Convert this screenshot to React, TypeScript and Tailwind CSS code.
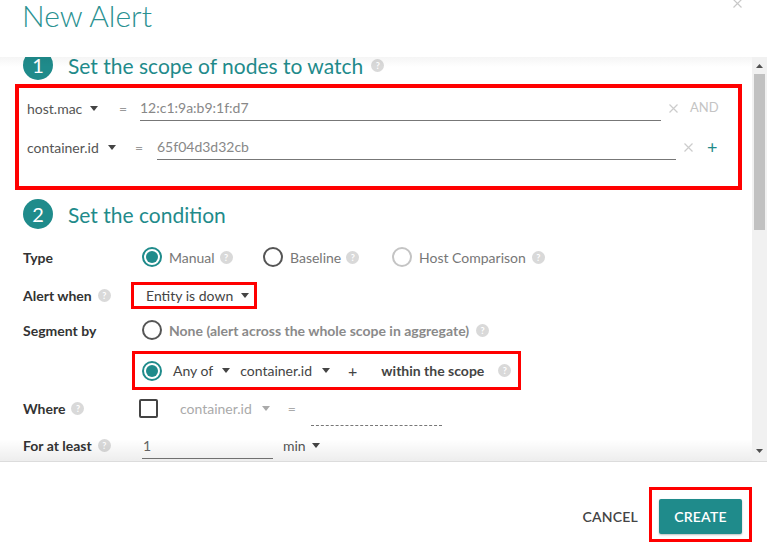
import React from "react";

function Help({ className = "" }: { className?: string }) {
  return (
    <span
      className={`inline-flex h-[13px] w-[13px] shrink-0 items-center justify-center rounded-full bg-[#d9d9d9] text-[9px] font-bold leading-none text-white ${className}`}
    >
      ?
    </span>
  );
}

function Caret({ className = "" }: { className?: string }) {
  return (
    <svg width="8" height="5" viewBox="0 0 8 5" className={`shrink-0 ${className}`}>
      <path d="M0 0h8L4 5z" fill="currentColor" />
    </svg>
  );
}

function Cross({ className = "" }: { className?: string }) {
  return (
    <svg width="9" height="9" viewBox="0 0 9 9" className={`shrink-0 ${className}`}>
      <path d="M0.5 0.5l8 8M8.5 0.5l-8 8" stroke="currentColor" strokeWidth="1.2" />
    </svg>
  );
}

function Radio({ kind }: { kind: "on" | "off" | "disabled" }) {
  if (kind === "on") {
    return (
      <span className="flex h-[20px] w-[20px] shrink-0 items-center justify-center rounded-full border-2 border-[#1f8b8b]">
        <span className="h-[12px] w-[12px] rounded-full bg-[#1f8b8b]" />
      </span>
    );
  }
  return (
    <span
      className={`h-[20px] w-[20px] shrink-0 rounded-full border-2 ${
        kind === "off" ? "border-[#555]" : "border-[#c4c4c4]"
      }`}
    />
  );
}

function Step({ n, title, help, className = "" }: { n: string; title: string; help?: boolean; className?: string }) {
  return (
    <div className={`flex h-[30px] items-center pl-[23px] ${className}`}>
      <span className="flex h-[30px] w-[30px] shrink-0 items-center justify-center rounded-full bg-[#1f8b8b] text-[20px] leading-none text-white">
        {n}
      </span>
      <span className="ml-[15px] text-[21px] leading-none text-[#1f8b8b]">{title}</span>
      {help && <Help className="ml-[8px]" />}
    </div>
  );
}

function Label({ text, help }: { text: string; help?: boolean }) {
  return (
    <div className="flex w-[108px] shrink-0 items-center font-bold text-[#333]">
      {text}
      {help && <Help className="ml-[6px]" />}
    </div>
  );
}

export default function App() {
  return (
    <div className="relative flex h-[545px] w-[767px] flex-col overflow-hidden bg-white font-['Lato',sans-serif] text-[14px] text-[#444]">
      {/* Header */}
      <header className="relative h-[57px] shrink-0 pl-[22px]">
        <h1 className="text-[30px] font-light leading-[30px] text-[#2a9191]">New Alert</h1>
        <Cross className="absolute right-[25px] top-[-1px] text-[#c8c8c8]" />
      </header>

      {/* Scrolling body */}
      <div className="relative flex h-[405px] shrink-0 border-b border-[#dcdcdc]">
        <div className="relative flex-1 overflow-hidden">
          <div className="flex flex-col">
            <Step n="1" title="Set the scope of nodes to watch" help className="mt-[-7px]" />

            <div className="ml-[15px] mt-[4px] h-[106px] w-[727px] border-4 border-[#ff0000] pl-[8px] pt-[7px]">
              <div className="flex h-[26px] items-center whitespace-nowrap">
                <span className="w-[55px] text-[#555]">host.mac</span>
                <Caret className="ml-[8px] text-[#444]" />
                <span className="ml-[21px] w-[7px] text-[#999]">=</span>
                <div className="ml-[14px] flex h-[26px] w-[521px] items-center border-b border-[#777] text-[#888]">
                  12:c1:9a:b9:1f:d7
                </div>
                <Cross className="ml-[8px] text-[#ccc]" />
                <span className="ml-[12px] text-[13px] text-[#c4c4c4]">AND</span>
              </div>
              <div className="mt-[13px] flex h-[26px] items-center whitespace-nowrap">
                <span className="w-[71px] text-[#555]">container.id</span>
                <Caret className="ml-[10px] text-[#444]" />
                <span className="ml-[19px] w-[7px] text-[#999]">=</span>
                <div className="ml-[15px] flex h-[26px] w-[519px] items-center border-b border-[#777] text-[#888]">
                  65f04d3d32cb
                </div>
                <Cross className="ml-[8px] text-[#ccc]" />
                <span className="ml-[14px] text-[18px] leading-none text-[#1f8b8b]">+</span>
              </div>
            </div>

            <Step n="2" title="Set the condition" className="mt-[9px]" />

            <div className="flex flex-col pl-[23px]">
              {/* Type */}
              <div className="mt-[16px] flex h-[24px] items-center whitespace-nowrap">
                <Label text="Type" />
                <div className="ml-[11px] flex w-[121px] items-center">
                  <Radio kind="on" />
                  <span className="ml-[7px] text-[#777]">Manual</span>
                  <Help className="ml-[5px]" />
                </div>
                <div className="flex w-[129px] items-center">
                  <Radio kind="off" />
                  <span className="ml-[7px] text-[#777]">Baseline</span>
                  <Help className="ml-[5px]" />
                </div>
                <div className="flex items-center">
                  <Radio kind="disabled" />
                  <span className="ml-[7px] text-[#777]">Host Comparison</span>
                  <Help className="ml-[6px]" />
                </div>
              </div>

              {/* Alert when */}
              <div className="mt-[13px] flex h-[27px] items-center whitespace-nowrap">
                <Label text="Alert when" help />
                <div className="flex h-[27px] w-[126px] items-center border-[3px] border-[#ff0000] pl-[12px] text-[#444]">
                  Entity is down
                  <Caret className="ml-[8px] text-[#444]" />
                </div>
              </div>

              {/* Segment by */}
              <div className="mt-[9px] flex h-[24px] items-center whitespace-nowrap">
                <Label text="Segment by" />
                <div className="ml-[11px] flex items-center">
                  <Radio kind="off" />
                  <span className="ml-[7px] font-bold text-[#8a8a8a]">None (alert across the whole scope in aggregate)</span>
                  <Help className="ml-[7px]" />
                </div>
              </div>

              <div className="mt-[9px] flex h-[39px] items-center whitespace-nowrap">
                <div className="w-[109px] shrink-0" />
                <div className="flex h-[39px] w-[389px] items-center border-[3px] border-[#ff0000] pl-[7px]">
                  <Radio kind="on" />
                  <span className="ml-[11px]">Any of</span>
                  <Caret className="ml-[9px] text-[#444]" />
                  <span className="ml-[10px]">container.id</span>
                  <Caret className="ml-[10px] text-[#444]" />
                  <span className="ml-[18px] text-[16px] leading-none">+</span>
                  <span className="ml-[24px] font-bold text-[#444]">within the scope</span>
                  <Help className="ml-[14px]" />
                </div>
              </div>

              {/* Where */}
              <div className="mt-[6px] flex h-[24px] items-center whitespace-nowrap">
                <Label text="Where" help />
                <span className="ml-[8px] h-[19px] w-[19px] shrink-0 rounded-[2px] border-2 border-[#444]" />
                <span className="ml-[22px] text-[#aaa]">container.id</span>
                <Caret className="ml-[10px] text-[#aaa]" />
                <span className="ml-[18px] text-[#aaa]">=</span>
                <span className="ml-[15px] mt-[34px] h-0 w-[131px] border-b border-dashed border-[#777]" />
              </div>

              {/* For at least */}
              <div className="mt-[13px] flex h-[24px] items-center whitespace-nowrap">
                <Label text="For at least" help />
                <div className="ml-[11px] flex h-[26px] w-[131px] items-center self-start border-b border-[#777] pl-[1px] text-[#666]">
                  1
                </div>
                <span className="ml-[10px] text-[#555]">min</span>
                <Caret className="ml-[6px] text-[#444]" />
              </div>
            </div>
          </div>

          {/* scroll shadows */}
          <div className="pointer-events-none absolute inset-x-0 top-0 h-[10px] bg-gradient-to-b from-black/[0.04] to-transparent" />
          <div className="pointer-events-none absolute inset-x-0 bottom-0 h-[22px] bg-gradient-to-t from-black/[0.07] to-transparent" />
        </div>

        {/* scrollbar */}
        <div className="flex w-[15px] shrink-0 flex-col bg-[#f1f1f1]">
          <div className="flex h-[17px] items-center justify-center">
            <svg width="7" height="4" viewBox="0 0 7 4">
              <path d="M0 4h7L3.5 0z" fill="#505050" />
            </svg>
          </div>
          <div className="mx-[2px] h-[156px] bg-[#c1c1c1]" />
          <div className="flex-1" />
          <div className="flex h-[20px] items-center justify-center">
            <svg width="7" height="4" viewBox="0 0 7 4">
              <path d="M0 0h7L3.5 4z" fill="#505050" />
            </svg>
          </div>
        </div>
      </div>

      {/* Footer */}
      <div className="flex flex-1 items-start justify-end pr-[15px] pt-[25px]">
        <span className="mt-[20px] h-[20px] font-semibold leading-[20px] tracking-[0.2px] text-[#444]">CANCEL</span>
        <div className="ml-[11px] border-[3px] border-[#ff0000] pb-[5px] pl-[7px] pr-[7px] pt-[9px]">
          <button className="flex h-[35px] w-[83px] items-center justify-center rounded-[2px] bg-[#1f8b8b] font-semibold tracking-[0.2px] text-white shadow-[0_1px_2px_rgba(0,0,0,0.25)]">
            CREATE
          </button>
        </div>
      </div>
    </div>
  );
}
